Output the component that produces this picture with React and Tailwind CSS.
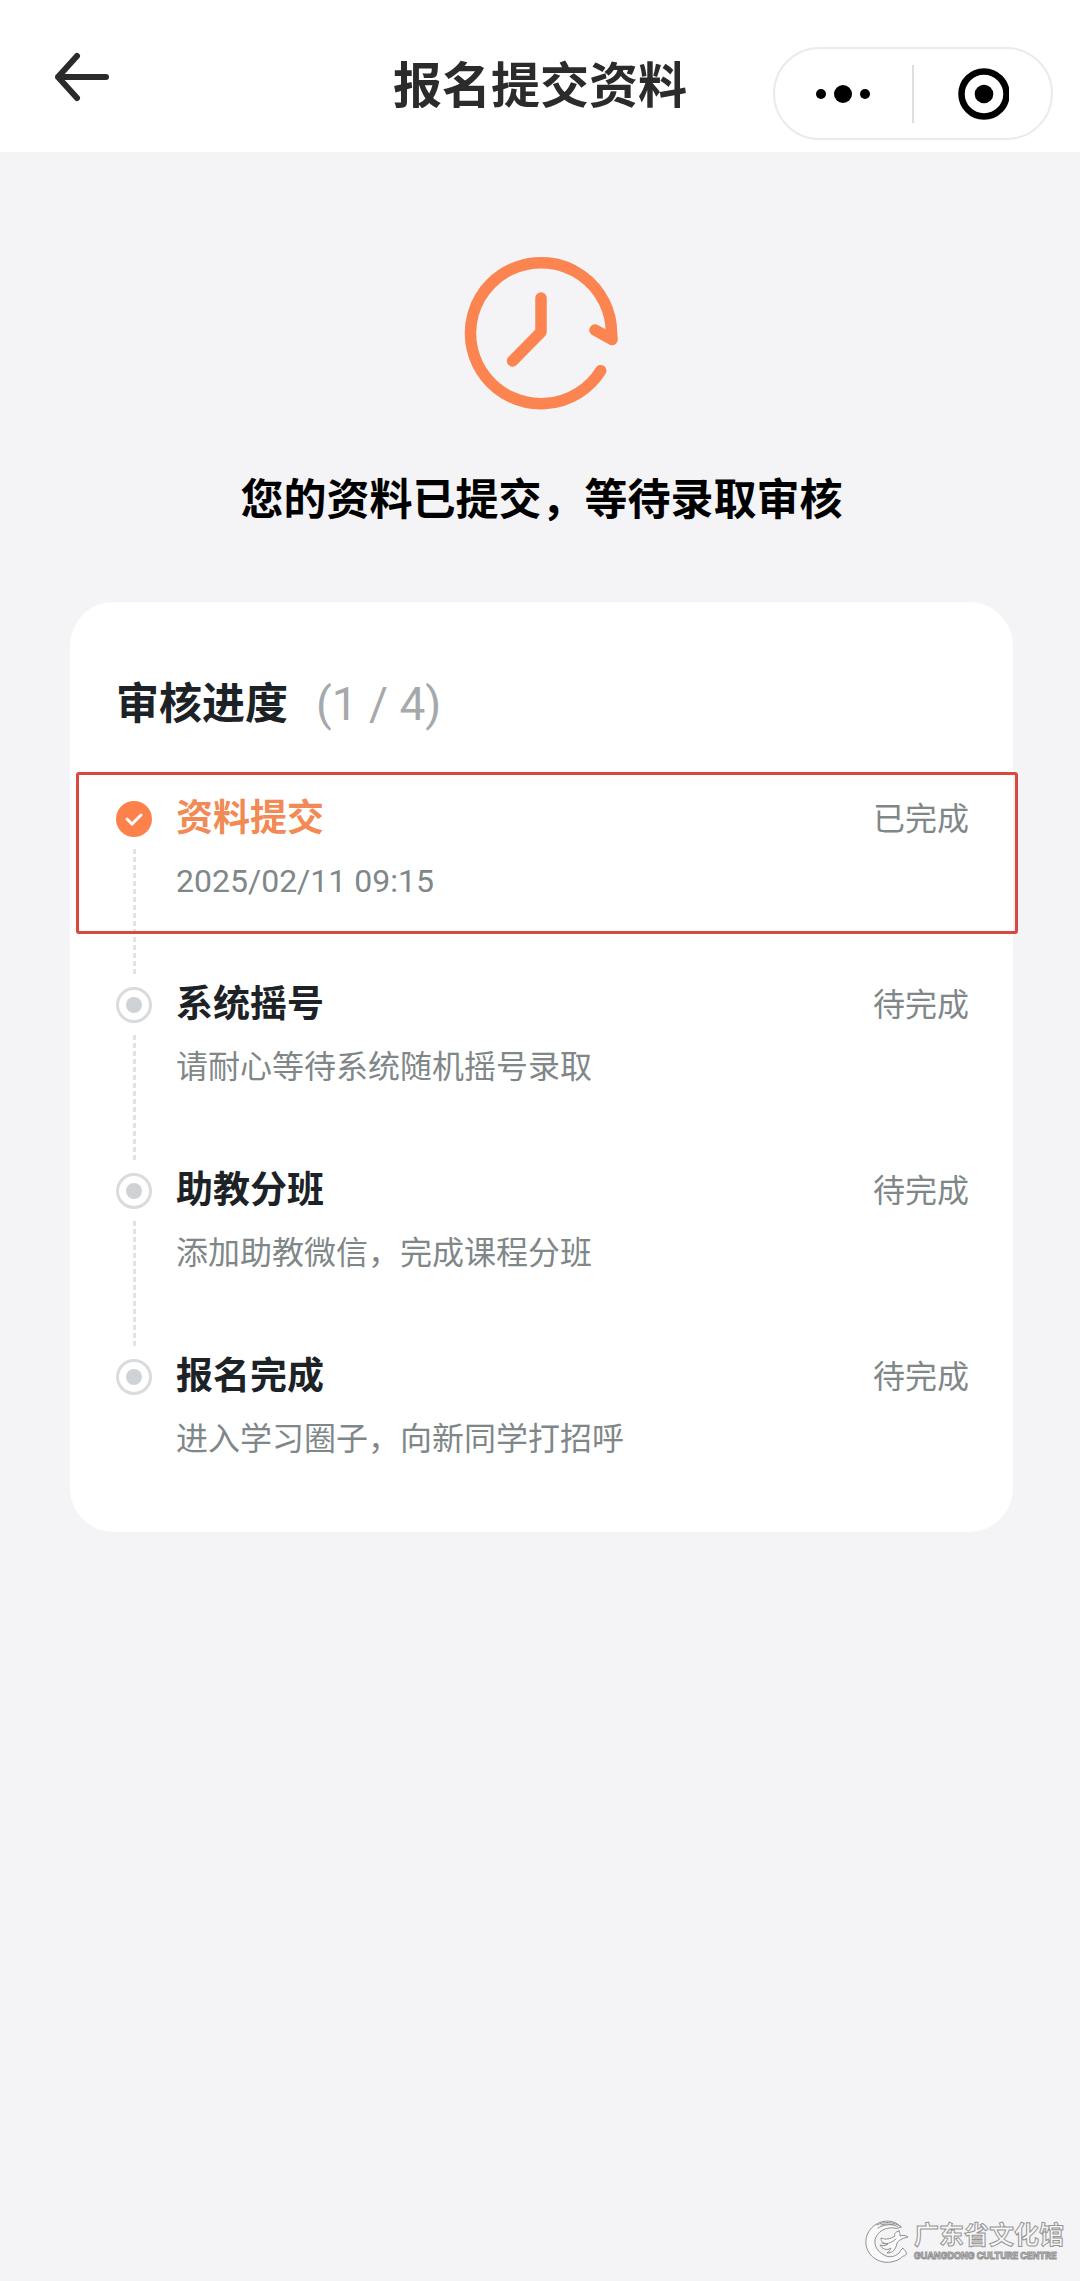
import React from "react";
import clsx from "clsx";

const steps = [
  { title: "资料提交", desc: "2025/02/11 09:15", status: "已完成", done: true },
  { title: "系统摇号", desc: "请耐心等待系统随机摇号录取", status: "待完成" },
  { title: "助教分班", desc: "添加助教微信，完成课程分班", status: "待完成" },
  { title: "报名完成", desc: "进入学习圈子，向新同学打招呼", status: "待完成" },
];

const Header = () => (
  <header className="grid grid-cols-[1fr_auto_1fr] items-start bg-white px-[27px] pt-[47px] pb-3">
    <button type="button" aria-label="返回" className="ml-6 h-[60px] w-[60px] text-[#2b2b2b]">
      <svg viewBox="0 0 60 60" className="h-full w-full" fill="none" stroke="currentColor" strokeWidth="6" strokeLinecap="round" strokeLinejoin="round">
        <path d="M55 30H7M26 9L7 30l19 21" />
      </svg>
    </button>
    <h1 className="text-[49px] leading-[80px] font-bold text-[#2b2b2b]">报名提交资料</h1>
    <div className="flex h-[93px] w-[280px] items-center justify-self-end rounded-full border-2 border-[#ebebeb] bg-white">
      <button type="button" aria-label="更多" className="flex h-full flex-1 items-center justify-center">
        <svg viewBox="0 0 56 20" className="h-5 w-14" fill="#000">
          <circle cx="5" cy="10" r="5" />
          <circle cx="27" cy="10" r="9" />
          <circle cx="49" cy="10" r="5" />
        </svg>
      </button>
      <span className="h-[58px] w-[2px] bg-[#dedede]" />
      <button type="button" aria-label="关闭" className="flex h-full flex-1 items-center justify-center">
        <svg viewBox="0 0 52 52" className="h-[52px] w-[52px]">
          <circle cx="27" cy="26" r="22.5" fill="none" stroke="#000" strokeWidth="6.5" />
          <circle cx="27" cy="26" r="9.3" fill="#000" />
        </svg>
      </button>
    </div>
  </header>
);

const ClockIcon = () => (
  <svg viewBox="0 0 160 160" className="h-40 w-40" fill="none" stroke="#fb8450" strokeWidth="11.5" strokeLinecap="round" strokeLinejoin="round">
    <path d="M138.700 117.700A70.500 70.500 0 1 1 149.500 79.500L150 86.500L133 77" />
    <path d="M79 45v34L50.500 108" />
  </svg>
);

const StepMarker = ({ done }) =>
  done ? (
    <svg viewBox="0 0 36 36" className="h-9 w-9">
      <circle cx="18" cy="18" r="18" fill="#fd814a" />
      <path d="M11 18l5 5 9-9" fill="none" stroke="#fff" strokeWidth="3" strokeLinecap="round" strokeLinejoin="round" />
    </svg>
  ) : (
    <svg viewBox="0 0 36 36" className="h-9 w-9">
      <circle cx="18" cy="18" r="16.5" fill="#fff" stroke="#d9dbdc" strokeWidth="3" />
      <circle cx="18" cy="18" r="8" fill="#d0d3d5" />
    </svg>
  );

const Step = ({ step, last }) => (
  <li className="flex gap-6">
    <div className="flex w-9 flex-col items-center">
      <div className="flex h-12 items-center">
        <StepMarker done={step.done} />
      </div>
      {!last && (
        <span className="my-1.5 w-[3px] flex-1 bg-[repeating-linear-gradient(to_bottom,#e2e3e4_0px,#e2e3e4_5px,transparent_5px,transparent_8px)]" />
      )}
    </div>
    <div className={clsx("flex-1", !last && "pb-[76px]")}>
      <div className="flex items-center justify-between">
        <h3 className={clsx("text-[37px] leading-[48px] font-bold", step.done ? "text-[#f28a55]" : "text-[#1c2226]")}>
          {step.title}
        </h3>
        <span className="text-[32px] leading-[48px] text-[#7f8788]">{step.status}</span>
      </div>
      <p className="mt-[14px] text-[32px] leading-[48px] text-[#7f8788]">{step.desc}</p>
    </div>
  </li>
);

const Watermark = () => (
  <footer className="mt-auto flex items-center justify-end gap-1 pr-4 pb-4">
    <svg viewBox="0 0 46 46" className="h-[46px] w-[46px]" fill="#fafafa" stroke="#8f8f8f" strokeWidth="1" strokeLinejoin="round" strokeLinecap="round">
      <path d="M37 8C31 1 20 0 11 6C1 13-1 26 6 35c6 8 17 10 25 7 4-1 6-3 8-5 2 0 4-1 3-4-1-2-2-2-3-4-2 1-2 3-4 5-4 4-10 5-15 2-8-4-11-12-8-18C15 11 24 8 30 9c3 1 5 0 7-1z" />
      <path d="M13 6C20 2 29 3 36 7M17 6c6-2 12-1 17 2M14 9c5-3 11-4 16-3" fill="none" />
      <path d="M35 12c-4 1-5 3-4 5-5 3-9 4-14 2 0 4 3 6 7 6-3 2-5 2-8 1 2 4 7 6 11 3-1 2-2 4-4 5 6 0 9-4 10-10 3-4 7-5 11-6-3-2-5-2-8-1 0-2 0-3-1-5z" />
      <path d="M18 24c4 2 9 0 14-4" fill="none" />
    </svg>
    <div className="text-[#f7f7f7]">
      <p className="text-[25px] leading-[28px] font-bold [-webkit-text-stroke:1px_#949494]">广东省文化馆</p>
      <p className="font-[Inter] text-[9px] leading-3 font-bold [-webkit-text-stroke:1px_#949494]">GUANGDONG CULTURE CENTRE</p>
    </div>
  </footer>
);

const App = () => (
  <div className="flex min-h-screen flex-col bg-[#f4f4f6] font-[Roboto,'Noto_Sans_CJK_SC',sans-serif]">
    <Header />
    <main className="flex flex-col pl-[70px] pr-[67px] pt-[101px]">
      <div className="flex flex-col items-center">
        <ClockIcon />
        <h2 className="mt-[55px] text-[43px] leading-[64px] font-bold text-black">您的资料已提交，等待录取审核</h2>
      </div>

      <section className="relative mt-[70px] rounded-[44px] bg-white pt-[72px] pr-11 pb-[69px] pl-[46px]">
        <h2 className="flex items-center gap-7 text-[43px] leading-[60px] font-bold text-[#1c2226]">
          审核进度
          <span className="text-[46px] font-normal text-[#a5a9ab]">(1 / 4)</span>
        </h2>
        <ol className="mt-[61px]">
          {steps.map((step, i) => (
            <Step key={step.title} step={step} last={i === steps.length - 1} />
          ))}
        </ol>
        {/* highlight frame around the current step */}
        <div className="pointer-events-none absolute top-[170px] -right-[5px] left-1.5 h-[162px] rounded-[3px] border-3 border-[#d9483f]" />
      </section>
    </main>
    <Watermark />
  </div>
);

export default App;
